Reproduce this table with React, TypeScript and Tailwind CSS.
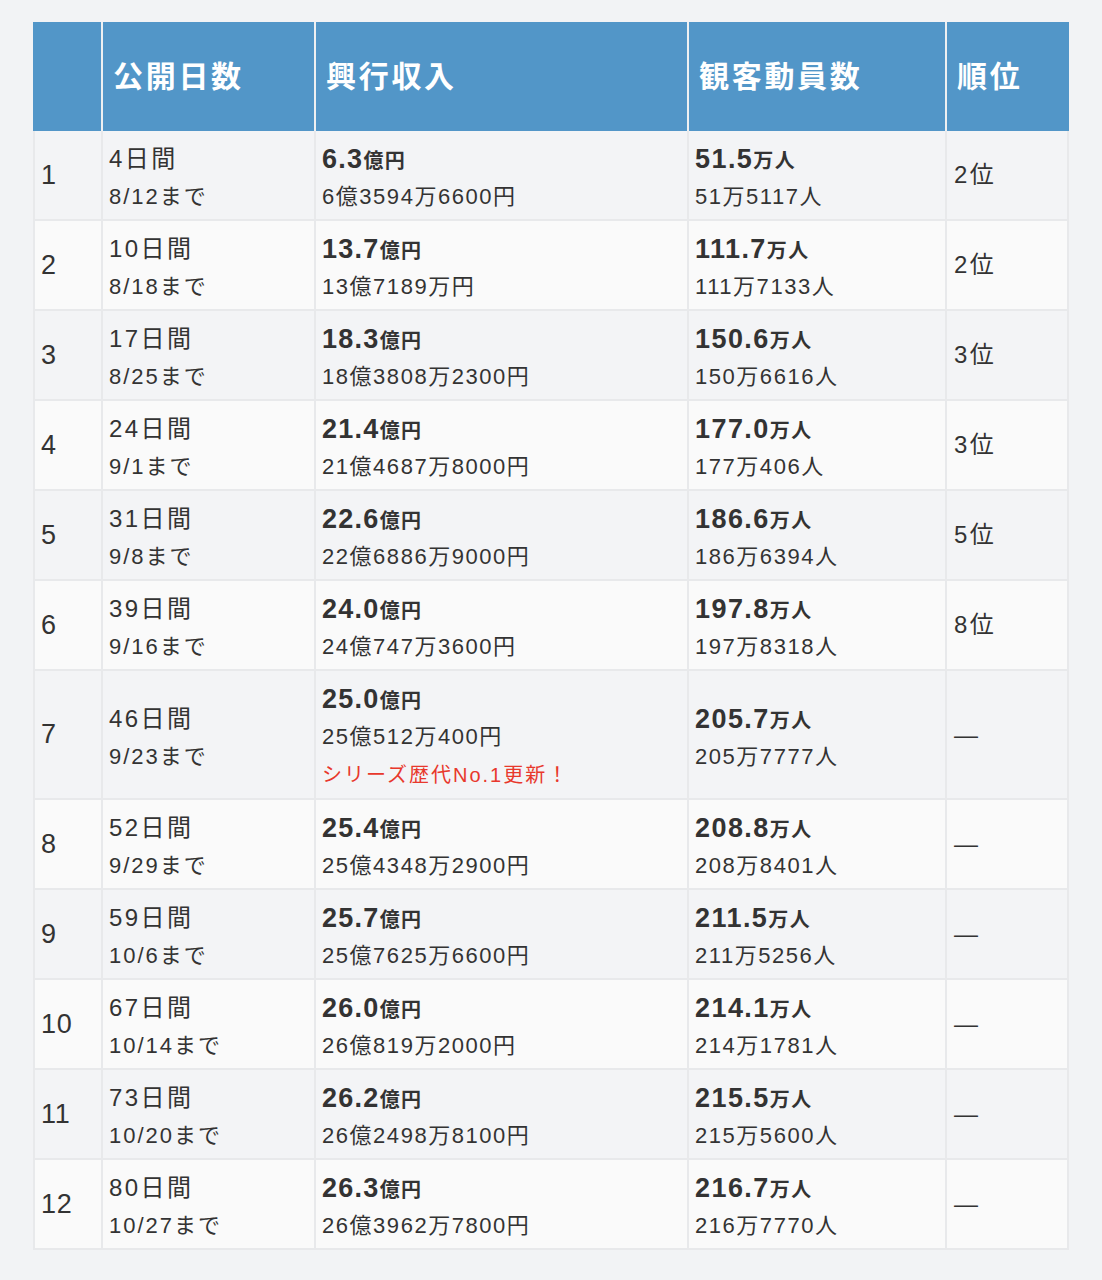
import React from 'react'

type Row = {
  no: number
  days: string
  until: string
  gross: string
  grossFull: string
  note?: string
  people: string
  peopleFull: string
  rank: string
}

const rows: Row[] = [
  { no: 1, days: '4日間', until: '8/12まで', gross: '6.3', grossFull: '6億3594万6600円', people: '51.5', peopleFull: '51万5117人', rank: '2位' },
  { no: 2, days: '10日間', until: '8/18まで', gross: '13.7', grossFull: '13億7189万円', people: '111.7', peopleFull: '111万7133人', rank: '2位' },
  { no: 3, days: '17日間', until: '8/25まで', gross: '18.3', grossFull: '18億3808万2300円', people: '150.6', peopleFull: '150万6616人', rank: '3位' },
  { no: 4, days: '24日間', until: '9/1まで', gross: '21.4', grossFull: '21億4687万8000円', people: '177.0', peopleFull: '177万406人', rank: '3位' },
  { no: 5, days: '31日間', until: '9/8まで', gross: '22.6', grossFull: '22億6886万9000円', people: '186.6', peopleFull: '186万6394人', rank: '5位' },
  { no: 6, days: '39日間', until: '9/16まで', gross: '24.0', grossFull: '24億747万3600円', people: '197.8', peopleFull: '197万8318人', rank: '8位' },
  { no: 7, days: '46日間', until: '9/23まで', gross: '25.0', grossFull: '25億512万400円', note: 'シリーズ歴代No.1更新！', people: '205.7', peopleFull: '205万7777人', rank: '—' },
  { no: 8, days: '52日間', until: '9/29まで', gross: '25.4', grossFull: '25億4348万2900円', people: '208.8', peopleFull: '208万8401人', rank: '—' },
  { no: 9, days: '59日間', until: '10/6まで', gross: '25.7', grossFull: '25億7625万6600円', people: '211.5', peopleFull: '211万5256人', rank: '—' },
  { no: 10, days: '67日間', until: '10/14まで', gross: '26.0', grossFull: '26億819万2000円', people: '214.1', peopleFull: '214万1781人', rank: '—' },
  { no: 11, days: '73日間', until: '10/20まで', gross: '26.2', grossFull: '26億2498万8100円', people: '215.5', peopleFull: '215万5600人', rank: '—' },
  { no: 12, days: '80日間', until: '10/27まで', gross: '26.3', grossFull: '26億3962万7800円', people: '216.7', peopleFull: '216万7770人', rank: '—' },
]

const headers = ['', '公開日数', '興行収入', '観客動員数', '順位']

export default function App() {
  return (
    <div
      className="min-h-[1280px] bg-[#f2f3f5] pt-[22px] pl-[33px] text-[#333] tracking-[0.05em]"
      style={{ fontFamily: '"Liberation Sans", "Noto Sans CJK JP", sans-serif' }}
    >
      <table className="table-fixed w-[1036px] border-separate border-spacing-0">
        <colgroup>
          <col className="w-[70px]" />
          <col className="w-[213px]" />
          <col className="w-[373px]" />
          <col className="w-[258px]" />
          <col className="w-[122px]" />
        </colgroup>
        <thead>
          <tr>
            {headers.map((h, i) => (
              <th
                key={i}
                className={`h-[109px] bg-[#5296c8] text-white text-left align-middle pl-[10px] pr-0 text-[30px] font-bold leading-none tracking-[0.09em] ${
                  i < headers.length - 1 ? 'border-r-2 border-[#eef0f2]' : ''
                }`}
              >
                {h}
              </th>
            ))}
          </tr>
        </thead>
        <tbody>
          {rows.map((r, i) => {
            const bg = i % 2 === 0 ? 'bg-[#f3f4f6]' : 'bg-[#fafafa]'
            const base = `${bg} border-r-2 border-b-2 border-[#e8e9eb] align-middle`
            const cell = `${base} pt-[9px] pb-[3px] pl-[6px] pr-0`
            return (
              <tr key={r.no}>
                <td className={`${base} border-l-2 pl-[6px] text-[27px] leading-none`}>{r.no}</td>
                <td className={cell}>
                  <div className="h-[38px] leading-[38px] text-[24px] tracking-[0.1em]">{r.days}</div>
                  <div className="h-[38px] leading-[38px] text-[22px] tracking-[0.09em]">{r.until}</div>
                </td>
                <td className={cell}>
                  <div className="h-[38px] leading-[38px] font-bold whitespace-nowrap tracking-[0.08em]">
                    <span className="text-[27px]">{r.gross}</span>
                    <span className="text-[20px]">億円</span>
                  </div>
                  <div className="h-[38px] leading-[38px] text-[22px] tracking-[0.07em]">{r.grossFull}</div>
                  {r.note && (
                    <div className="h-[39px] leading-[39px] text-[20px] tracking-[0.1em] text-[#e8382c]">{r.note}</div>
                  )}
                </td>
                <td className={cell}>
                  <div className="h-[38px] leading-[38px] font-bold whitespace-nowrap tracking-[0.09em]">
                    <span className="text-[27px]">{r.people}</span>
                    <span className="text-[20px]">万人</span>
                  </div>
                  <div className="h-[38px] leading-[38px] text-[22px] tracking-[0.07em]">{r.peopleFull}</div>
                </td>
                <td className={`${base} pl-[7px] text-[24px] leading-none tracking-[0.1em]`}>{r.rank}</td>
              </tr>
            )
          })}
        </tbody>
      </table>
    </div>
  )
}
